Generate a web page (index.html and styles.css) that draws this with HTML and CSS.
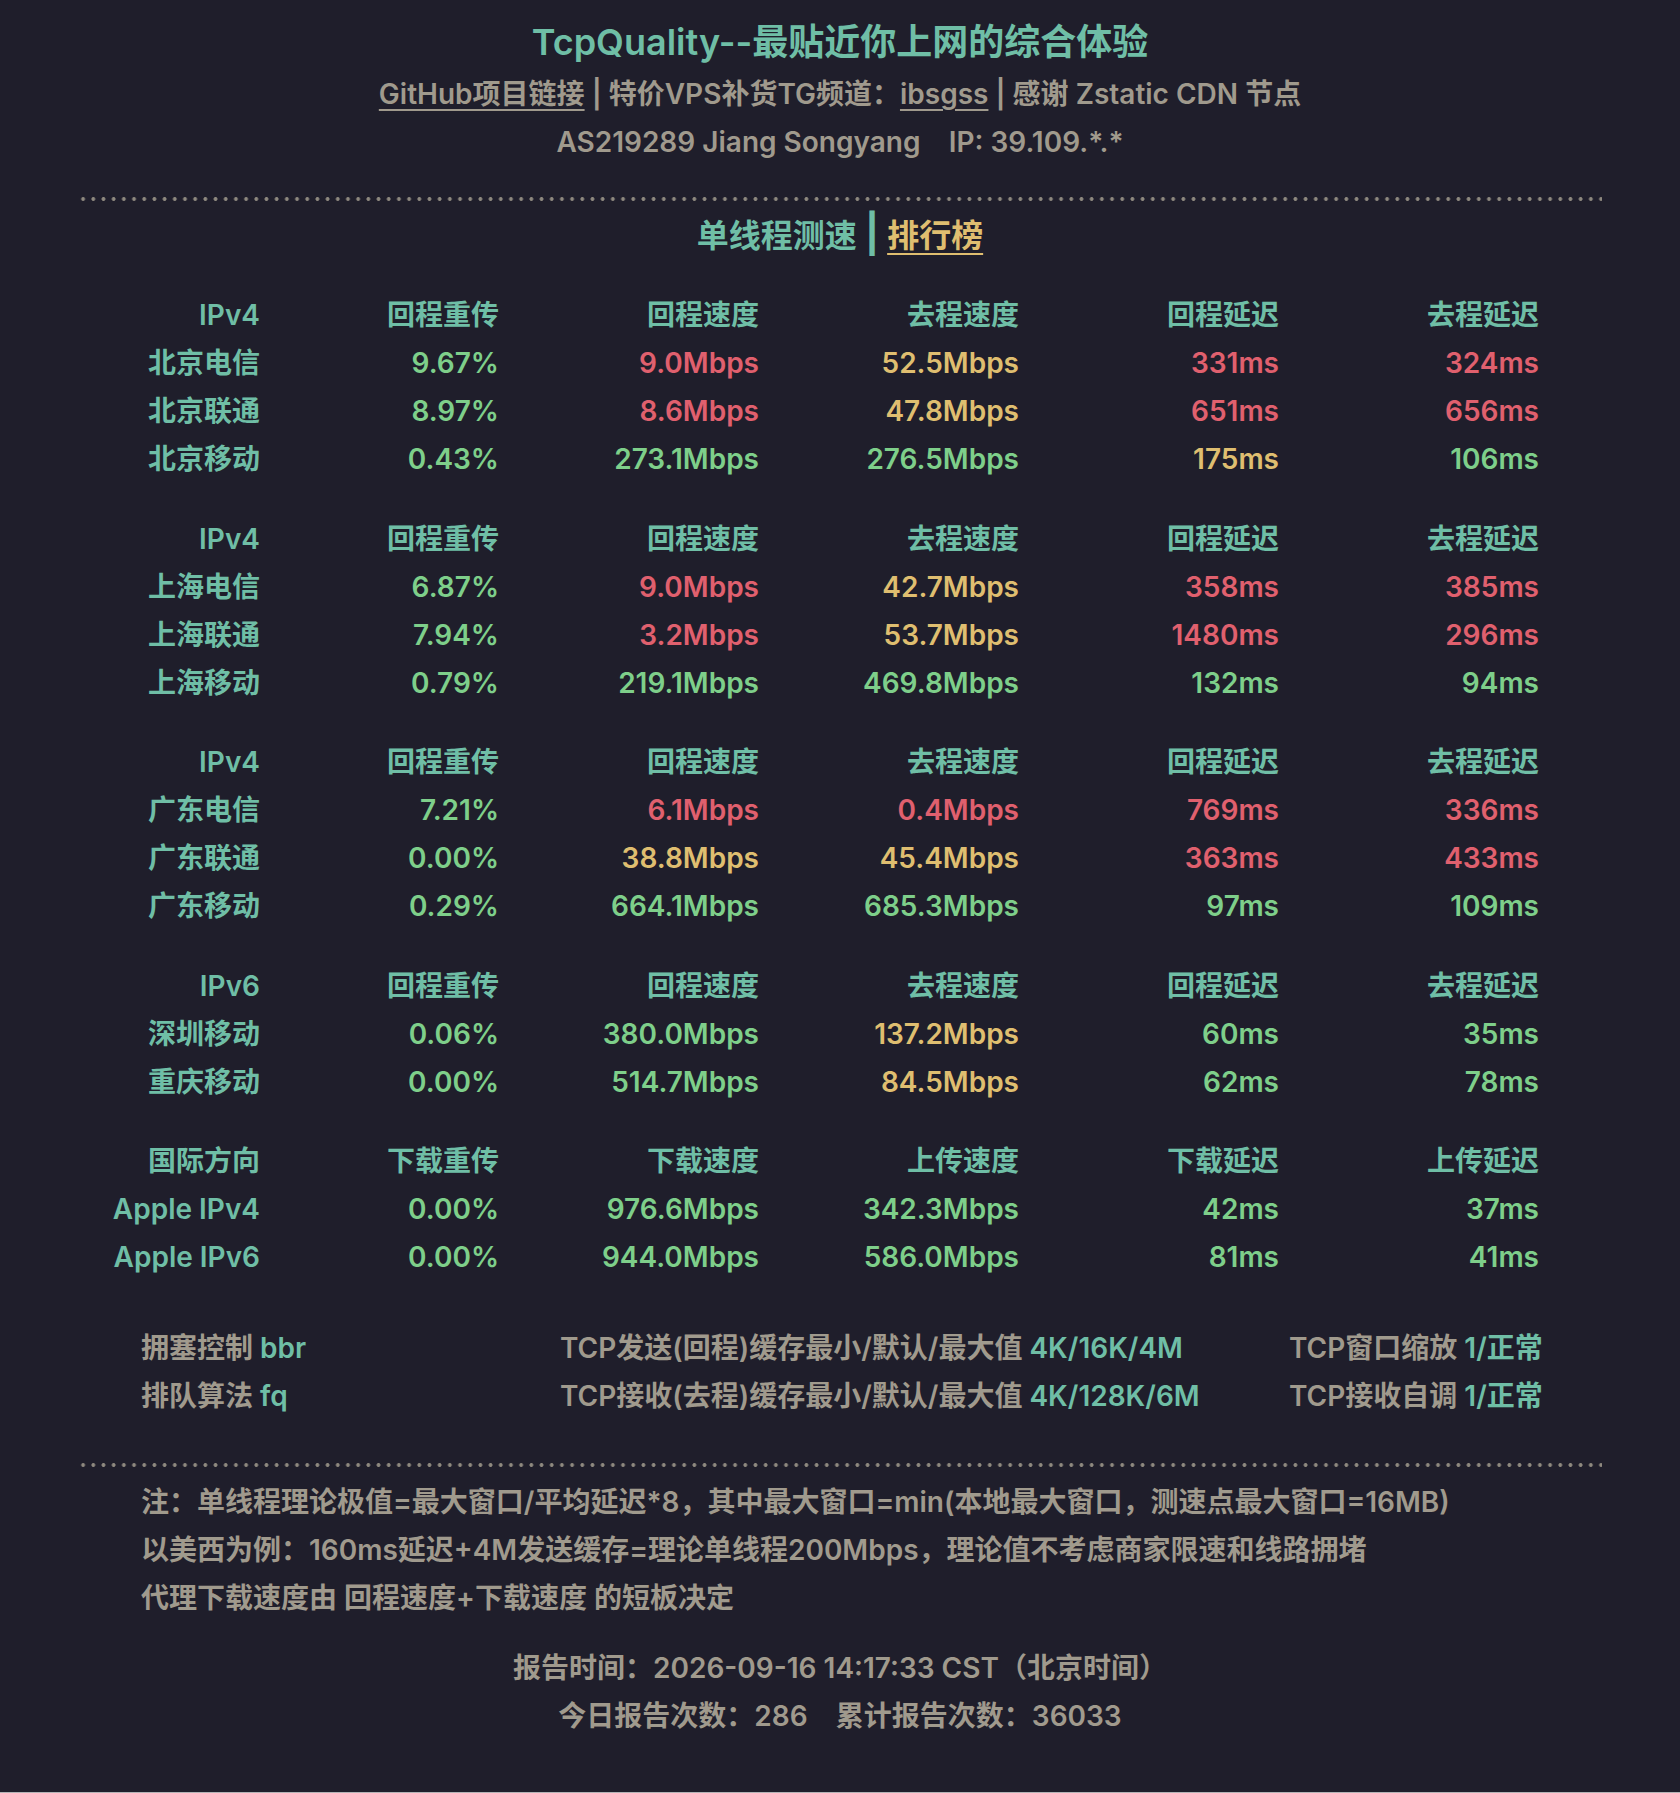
FILE: index.html
```html
<!DOCTYPE html>
<html lang="zh-CN">
<head>
<meta charset="utf-8">
<title>TcpQuality</title>
<link rel="stylesheet" href="styles.css">
</head>
<body>
<div class="page">
  <header class="head">
    <h1 class="title">TcpQuality--最贴近你上网的综合体验</h1>
    <p class="line"><a class="lnk" href="#">GitHub项目链接</a> | 特价VPS补货TG频道：<a class="lnk" href="#">ibsgss</a> | 感谢 Zstatic CDN 节点</p>
    <p class="line">AS219289 Jiang Songyang&nbsp;&nbsp;&nbsp;&nbsp;IP: 39.109.*.*</p>
  </header>

  <div class="dots dots-top"></div>

  <h2 class="section">单线程测速 <span class="bar">|</span> <a class="rank" href="#">排行榜</a></h2>

  <div class="grid grid-first">
    <span class="h">IPv4</span><span class="h">回程重传</span><span class="h">回程速度</span><span class="h">去程速度</span><span class="h">回程延迟</span><span class="h">去程延迟</span>
    <span class="h">北京电信</span><span class="g">9.67%</span><span class="r">9.0Mbps</span><span class="y">52.5Mbps</span><span class="r">331ms</span><span class="r">324ms</span>
    <span class="h">北京联通</span><span class="g">8.97%</span><span class="r">8.6Mbps</span><span class="y">47.8Mbps</span><span class="r">651ms</span><span class="r">656ms</span>
    <span class="h">北京移动</span><span class="g">0.43%</span><span class="g">273.1Mbps</span><span class="g">276.5Mbps</span><span class="y">175ms</span><span class="g">106ms</span>
  </div>

  <div class="grid">
    <span class="h">IPv4</span><span class="h">回程重传</span><span class="h">回程速度</span><span class="h">去程速度</span><span class="h">回程延迟</span><span class="h">去程延迟</span>
    <span class="h">上海电信</span><span class="g">6.87%</span><span class="r">9.0Mbps</span><span class="y">42.7Mbps</span><span class="r">358ms</span><span class="r">385ms</span>
    <span class="h">上海联通</span><span class="g">7.94%</span><span class="r">3.2Mbps</span><span class="y">53.7Mbps</span><span class="r">1480ms</span><span class="r">296ms</span>
    <span class="h">上海移动</span><span class="g">0.79%</span><span class="g">219.1Mbps</span><span class="g">469.8Mbps</span><span class="g">132ms</span><span class="g">94ms</span>
  </div>

  <div class="grid">
    <span class="h">IPv4</span><span class="h">回程重传</span><span class="h">回程速度</span><span class="h">去程速度</span><span class="h">回程延迟</span><span class="h">去程延迟</span>
    <span class="h">广东电信</span><span class="g">7.21%</span><span class="r">6.1Mbps</span><span class="r">0.4Mbps</span><span class="r">769ms</span><span class="r">336ms</span>
    <span class="h">广东联通</span><span class="g">0.00%</span><span class="y">38.8Mbps</span><span class="y">45.4Mbps</span><span class="r">363ms</span><span class="r">433ms</span>
    <span class="h">广东移动</span><span class="g">0.29%</span><span class="g">664.1Mbps</span><span class="g">685.3Mbps</span><span class="g">97ms</span><span class="g">109ms</span>
  </div>

  <div class="grid">
    <span class="h">IPv6</span><span class="h">回程重传</span><span class="h">回程速度</span><span class="h">去程速度</span><span class="h">回程延迟</span><span class="h">去程延迟</span>
    <span class="h">深圳移动</span><span class="g">0.06%</span><span class="g">380.0Mbps</span><span class="y">137.2Mbps</span><span class="g">60ms</span><span class="g">35ms</span>
    <span class="h">重庆移动</span><span class="g">0.00%</span><span class="g">514.7Mbps</span><span class="y">84.5Mbps</span><span class="g">62ms</span><span class="g">78ms</span>
  </div>

  <div class="grid">
    <span class="h">国际方向</span><span class="h">下载重传</span><span class="h">下载速度</span><span class="h">上传速度</span><span class="h">下载延迟</span><span class="h">上传延迟</span>
    <span class="h">Apple IPv4</span><span class="g">0.00%</span><span class="g">976.6Mbps</span><span class="g">342.3Mbps</span><span class="g">42ms</span><span class="g">37ms</span>
    <span class="h">Apple IPv6</span><span class="g">0.00%</span><span class="g">944.0Mbps</span><span class="g">586.0Mbps</span><span class="g">81ms</span><span class="g">41ms</span>
  </div>

  <div class="config">
    <span>拥塞控制 <b class="v">bbr</b></span>
    <span>TCP发送(回程)缓存最小/默认/最大值 <b class="v">4K/16K/4M</b></span>
    <span>TCP窗口缩放 <b class="v">1/正常</b></span>
    <span>排队算法 <b class="v">fq</b></span>
    <span>TCP接收(去程)缓存最小/默认/最大值 <b class="v">4K/128K/6M</b></span>
    <span>TCP接收自调 <b class="v">1/正常</b></span>
  </div>

  <div class="dots dots-bottom"></div>

  <div class="notes">
    <p>注：单线程理论极值=最大窗口/平均延迟*8，其中最大窗口=min(本地最大窗口，测速点最大窗口=16MB)</p>
    <p>以美西为例：160ms延迟+4M发送缓存=理论单线程200Mbps，理论值不考虑商家限速和线路拥堵</p>
    <p>代理下载速度由 回程速度+下载速度 的短板决定</p>
  </div>

  <footer class="report">
    <p>报告时间：2026-09-16 14:17:33 CST（北京时间）</p>
    <p>今日报告次数：286&nbsp;&nbsp;&nbsp;&nbsp;累计报告次数：36033</p>
  </footer>
</div>
</body>
</html>
```

FILE: styles.css
```css
html {
  background: #b4b4b6;
}

body {
  margin: 0;
  font-family: Inter, "Noto Sans CJK SC", sans-serif;
  font-weight: 600;
  font-size: 28px;
  line-height: 48px;
  color: #a09a8d;
}

.page {
  background: #1f1e2b;
  min-height: 1792px;
  padding-top: 18px;
  box-sizing: border-box;
  display: flow-root;
}

p, h1, h2 {
  margin: 0;
}

.head {
  text-align: center;
}

.title {
  font-size: 36px;
  line-height: 48px;
  font-weight: 600;
  color: #6fbea6;
  margin-bottom: 4px;
}

.line {
  color: #a09a8d;
}

.lnk {
  color: #a09a8d;
  text-decoration: underline;
  text-underline-offset: 5px;
  text-decoration-thickness: 2px;
}

.dots {
  height: 4px;
  margin: 0 78px;
  background-image: radial-gradient(circle at center, #8e897f 1.6px, rgba(142, 137, 127, 0) 2.2px);
  background-size: 10.2px 4px;
  background-repeat: repeat-x;
}

.dots-top {
  margin-top: 31px;
}

.dots-bottom {
  margin-top: 43px;
}

.section {
  margin-top: 8px;
  text-align: center;
  font-size: 32px;
  line-height: 48px;
  font-weight: 600;
  color: #6fbea6;
}

.bar {
  font-size: 38px;
  font-weight: 700;
}

.rank {
  color: #dfbe70;
  text-decoration: underline;
  text-underline-offset: 6px;
  text-decoration-thickness: 2px;
}

.grid {
  display: grid;
  grid-template-columns: 180px 239px 260px 260px 260px 260px;
  margin-left: 80px;
  margin-bottom: 31.5px;
  text-align: right;
  white-space: nowrap;
}

.grid-first {
  margin-top: 31px;
}

.h { color: #6fbea6; }
.g { color: #7ecf8a; }
.r { color: #e0606e; }
.y { color: #dfbe70; }

.config {
  display: grid;
  grid-template-columns: 419px 729px 250px;
  margin-left: 141px;
  margin-top: 42.5px;
  white-space: nowrap;
  color: #a09a8d;
}

.v {
  font-weight: 600;
  color: #6fbea6;
}

.notes {
  margin: 11px 0 0 141px;
  color: #a09a8d;
}

.report {
  margin-top: 22px;
  text-align: center;
  color: #a09a8d;
}
```
